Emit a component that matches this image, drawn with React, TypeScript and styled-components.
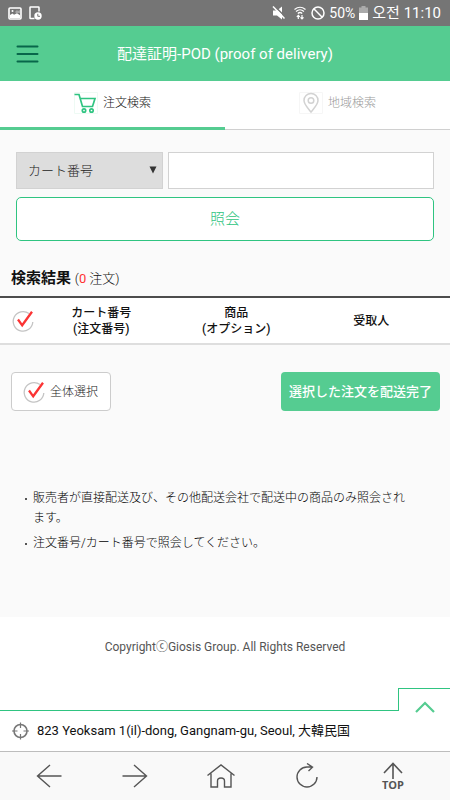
import React, { useState } from "react";
import styled, { createGlobalStyle } from "styled-components";

const green = "#55cc91";
const line = "#2fc481";
const ink = "#555";

const GlobalStyle = createGlobalStyle`
  * { box-sizing: border-box; }
  body {
    margin: 0;
    background: #fff;
    color: #222;
    font-family: Roboto, "Noto Sans CJK JP", sans-serif;
    font-size: 12px;
    line-height: 20px;
  }
  button, input, select { font: inherit; color: inherit; margin: 0; }
  button { cursor: pointer; }
`;

const Page = styled.div`
  min-height: 100vh;
  display: flex;
  flex-direction: column;
`;

const StatusBar = styled.div`
  height: 26px;
  padding: 0 9px 0 8px;
  display: flex;
  align-items: center;
  justify-content: space-between;
  background: #757575;
  color: #fff;
  font-family: Roboto, "Noto Sans CJK KR", sans-serif;
  font-size: 15px;
`;

const StatusGroup = styled.div<{ $gap: number }>`
  display: flex;
  align-items: center;
  gap: ${(p) => p.$gap}px;
  white-space: nowrap;
`;

const Percent = styled.span`
  font-size: 14px;
`;

const Header = styled.header`
  height: 55px;
  padding: 0 16px;
  display: grid;
  grid-template-columns: 24px 1fr 24px;
  align-items: center;
  background: ${green};
`;

const IconButton = styled.button`
  display: flex;
  align-items: center;
  justify-content: center;
  padding: 0;
  border: 0;
  background: none;
`;

const Title = styled.h1`
  margin: 0;
  text-align: center;
  color: #fff;
  font-size: 15px;
  font-weight: 400;
`;

const Tabs = styled.nav`
  display: grid;
  grid-template-columns: 1fr 1fr;
`;

const Tab = styled.button<{ $active: boolean }>`
  height: 49px;
  padding: 0 0 5px;
  display: flex;
  align-items: center;
  justify-content: center;
  gap: 5px;
  border: 0;
  background: #fff;
  box-shadow: inset 0 ${(p) => (p.$active ? `-3px ${green}` : "-1px #d0d0d0")};
  color: ${(p) => (p.$active ? "#111" : "#999")};
  font-weight: 300;
`;

const Main = styled.main`
  padding: 22px 0 64px;
  background: #fafafa;
`;

const Form = styled.form`
  padding: 0 16px;
  display: grid;
  grid-template-columns: 147px 1fr;
  gap: 8px 5px;
`;

const SelectBox = styled.div`
  position: relative;
`;

const Select = styled.select`
  appearance: none;
  width: 100%;
  height: 37px;
  padding: 0 24px 0 11px;
  border: 1px solid #d2d2d2;
  border-radius: 0;
  background: #ddd;
  font-size: 13px;
  font-weight: 300;
`;

const SelectArrow = styled.svg`
  position: absolute;
  right: 6px;
  top: 14px;
  pointer-events: none;
`;

const TextInput = styled.input`
  width: 100%;
  height: 37px;
  padding: 0 10px;
  border: 1px solid #d2d2d2;
  border-radius: 0;
  background: #fff;
`;

const SearchButton = styled.button`
  grid-column: 1 / -1;
  height: 44px;
  border: 1px solid ${line};
  border-radius: 5px;
  background: #fff;
  color: ${line};
  font-size: 15px;
  font-weight: 300;
`;

const ResultTitle = styled.h2`
  margin: 27px 11px 7px;
  font-size: 15px;
  font-weight: 700;
  color: #111;
`;

const ResultCount = styled.span`
  font-size: 13px;
  font-weight: 300;
`;

const Zero = styled.span`
  color: #f33;
  font-weight: 400;
`;

const ResultTable = styled.table`
  width: 100%;
  table-layout: fixed;
  border-collapse: collapse;
  background: #fff;
  border-top: 2px solid #4c4c4c;
  border-bottom: 2px solid #dedede;
`;

const HeadCell = styled.th<{ $width?: number }>`
  width: ${(p) => (p.$width ? `${p.$width}%` : "auto")};
  height: 47px;
  padding: 0;
  text-align: center;
  vertical-align: middle;
  line-height: 16px;
  font-weight: 500;
  color: #111;
`;

const TickLabel = styled.label`
  display: flex;
  align-items: center;
  justify-content: center;
  cursor: pointer;
`;

const HiddenInput = styled.input`
  appearance: none;
  width: 0;
  height: 0;
`;

const Actions = styled.div`
  padding: 27px 10px 0 11px;
  display: flex;
  justify-content: space-between;
`;

const SelectAll = styled.button`
  height: 39px;
  padding: 0 12px 0 11px;
  display: flex;
  align-items: center;
  gap: 5px;
  border: 1px solid #ccc;
  border-radius: 4px;
  background: #fff;
  font-weight: 300;
`;

const CompleteButton = styled.button`
  height: 39px;
  padding: 0 8px;
  border: 0;
  border-radius: 4px;
  background: ${green};
  color: #fff;
  font-size: 13px;
  font-weight: 500;
`;

const Notes = styled.ul`
  margin: 77px 32px 0 24px;
  padding: 0;
  display: grid;
  gap: 5px;
  list-style: none;
  font-weight: 300;
  color: #000;
`;

const Note = styled.li`
  display: grid;
  grid-template-columns: 9px minmax(0, 1fr);

  &::before {
    content: "";
    width: 2px;
    height: 2px;
    margin-top: 10px;
    margin-left: 1px;
    background: #555;
  }
`;

const NoteText = styled.span`
  padding-right: 8px;
`;

const Footer = styled.footer`
  padding: 20px 0 24px;
  text-align: center;
  color: #555;
`;

const Dock = styled.div`
  margin-top: auto;
`;

const DockTop = styled.div`
  display: flex;
`;

const DockLine = styled.div`
  flex: 1;
  border-bottom: 1px solid ${line};
`;

const DockToggle = styled(IconButton)`
  width: 52px;
  height: 23px;
  padding-top: 14px;
  border-top: 1px solid ${line};
  border-left: 1px solid ${line};
`;

const Location = styled.div`
  height: 40px;
  padding: 0 12px;
  display: flex;
  align-items: center;
  gap: 8px;
  font-size: 13px;
  color: #111;
`;

const Toolbar = styled.nav`
  height: 49px;
  padding: 0 14px 0 6px;
  display: grid;
  grid-template-columns: repeat(5, 1fr);
  border-top: 1px solid #bdbdbd;
  background: #f9f9f9;
`;

const TopButton = styled(IconButton)`
  flex-direction: column;
  color: ${ink};
  font-family: "Open Sans", sans-serif;
  font-size: 11px;
  line-height: 10px;
  font-weight: 700;
`;

const CheckIcon = () => (
  <svg width="22" height="22" viewBox="0 0 22 22" fill="none" aria-hidden="true">
    <path d="M17 3.6A9.8 9.8 0 1 0 20.8 12" stroke="#c4c4c4" strokeWidth="1.3" />
    <path d="M6 9.5l4.2 5.8L20 1.8" stroke="#fb3434" strokeWidth="2.3" />
  </svg>
);

const ToolIcon = ({ d }: { d: string }) => (
  <svg width="28" height="26" viewBox="0 0 28 26" fill="none" stroke={ink} strokeWidth="1.4" aria-hidden="true">
    <path d={d} />
  </svg>
);

export default function App() {
  const [tab, setTab] = useState(0);
  return (
    <Page>
      <GlobalStyle />
      <StatusBar>
        <StatusGroup $gap={7}>
          <svg width="14" height="13" viewBox="0 0 14 13" aria-hidden="true">
            <rect x="1" y="1" width="12" height="11" rx="1" fill="none" stroke="#fff" strokeWidth="1.6" />
            <path d="M2 8l2.5-1.5L6 7.8l3-1.6 3 2V11H2z" fill="#fff" />
            <circle cx="4.5" cy="4" r="1" fill="#fff" />
            <path d="M7 5l2-2 1 1 2-1v3H8z" fill="#fff" opacity=".35" />
          </svg>
          <svg width="13" height="14" viewBox="0 0 13 14" fill="none" aria-hidden="true">
            <path d="M5.5 12.5H1.6Q1 12.5 1 11.9V1.5Q1 1 1.6 1H9.4Q10 1 10 1.5V5.5" stroke="#fff" strokeWidth="1.5" />
            <circle cx="9" cy="10" r="3.7" fill="#fff" />
            <path d="M8.8 7.8V10.3H11" stroke="#757575" />
          </svg>
        </StatusGroup>
        <StatusGroup $gap={4}>
          <svg width="18" height="14" viewBox="0 0 18 14" aria-hidden="true">
            <path d="M2 4.5H6L11 .5V13.500L6 9.500H2z" fill="#fff" />
            <path d="M2.500 -1L15.500 12" stroke="#757575" strokeWidth="1.500" />
            <path d="M2 .5L13.500 12.500" stroke="#fff" strokeWidth="1.500" />
          </svg>
          <svg width="14" height="14" viewBox="6 0 14 14" fill="none" stroke="#fff" strokeWidth="1.2" aria-hidden="true">
            <path d="M7.5 3.5Q13 -1 18.5 3.5M9 5.5Q13 2 17 5.5M10.8 7.5Q13 5.5 15.2 7.5" />
            <path d="M11.3 13V9.5M9.8 10.8l1.5-1.5 1.5 1.5M15 9V12.5M13.5 11.3l1.5 1.5 1.5-1.5" />
          </svg>
          <svg width="14" height="14" viewBox="0 0 14 14" fill="none" stroke="#fff" strokeWidth="1.5" aria-hidden="true">
            <circle cx="7" cy="7" r="6" />
            <path d="M2.8 2.8l8.4 8.4" />
          </svg>
          <Percent>50%</Percent>
          <svg width="9" height="14" viewBox="0 0 9 14" aria-hidden="true">
            <path d="M2.5 0h4v1.5H9V7H0V1.5H2.5z" fill="#aaa" />
            <path d="M0 7h9v7H0z" fill="#fff" />
          </svg>
          <span>오전 11:10</span>
        </StatusGroup>
      </StatusBar>

      <Header>
        <IconButton type="button" aria-label="メニュー">
          <svg width="24" height="20" viewBox="0 0 24 20" stroke="#08664a" strokeWidth="2" strokeLinecap="round" aria-hidden="true">
            <path d="M1.5 2.5H21.5M1.5 10H21.5M1.5 17.5H21.5" />
          </svg>
        </IconButton>
        <Title>配達証明-POD (proof of delivery)</Title>
      </Header>

      <Tabs>
        <Tab type="button" $active={tab === 0} onClick={() => setTab(0)}>
          <svg width="24" height="22" viewBox="0 0 24 22" fill="none" stroke={line} strokeWidth="1.7" aria-hidden="true">
            <path d="M.5 .5H23.5V21.5H.5z" stroke="#eefaf4" strokeWidth="1" />
            <path d="M.5 2.5H5L8.5 14.5H18.5L21 6.5H6.3" />
            <circle cx="10" cy="18.5" r="1.7" />
            <circle cx="17.5" cy="18.5" r="1.7" />
          </svg>
          注文検索
        </Tab>
        <Tab type="button" $active={tab === 1} onClick={() => setTab(1)}>
          <svg width="24" height="22" viewBox="0 0 24 22" fill="none" stroke="#d2d2d2" strokeWidth="1.5" aria-hidden="true">
            <path d="M.5 .5H23.5V21.5H.5z" stroke="#f6f6f6" strokeWidth="1" />
            <path d="M12 20C9 16 5 12.5 5 8.5A7 7 0 0 1 19 8.5C19 12.5 15 16 12 20z" />
            <circle cx="12" cy="8.5" r="2.8" />
          </svg>
          地域検索
        </Tab>
      </Tabs>

      <Main>
        <Form onSubmit={(e) => e.preventDefault()}>
          <SelectBox>
            <Select aria-label="検索条件">
              <option>カート番号</option>
            </Select>
            <SelectArrow width="8" height="8" viewBox="0 0 8 8" aria-hidden="true">
              <path d="M.5 .5h7L4 7.5z" fill="#333" />
            </SelectArrow>
          </SelectBox>
          <TextInput type="text" aria-label="カート番号" />
          <SearchButton type="submit">照会</SearchButton>
        </Form>

        <ResultTitle>
          検索結果 <ResultCount>(<Zero>0</Zero> 注文)</ResultCount>
        </ResultTitle>
        <ResultTable>
          <thead>
            <tr>
              <HeadCell $width={10}>
                <TickLabel>
                  <HiddenInput type="checkbox" aria-label="選択" />
                  <CheckIcon />
                </TickLabel>
              </HeadCell>
              <HeadCell $width={25}>カート番号<br />(注文番号)</HeadCell>
              <HeadCell $width={35}>商品<br />(オプション)</HeadCell>
              <HeadCell $width={25}>受取人</HeadCell>
              <HeadCell $width={5} aria-hidden="true" />
            </tr>
          </thead>
        </ResultTable>

        <Actions>
          <SelectAll type="button">
            <CheckIcon />
            全体選択
          </SelectAll>
          <CompleteButton type="button">選択した注文を配送完了</CompleteButton>
        </Actions>

        <Notes>
          <Note>
            <NoteText>販売者が直接配送及び、その他配送会社で配送中の商品のみ照会されます。</NoteText>
          </Note>
          <Note>
            <NoteText>注文番号/カート番号で照会してください。</NoteText>
          </Note>
        </Notes>
      </Main>

      <Footer>CopyrightⓒGiosis Group. All Rights Reserved</Footer>

      <Dock>
        <DockTop>
          <DockLine />
          <DockToggle type="button" aria-label="開く">
            <svg width="20" height="12" viewBox="0 0 20 12" fill="none" stroke={green} strokeWidth="2.2" aria-hidden="true">
              <path d="M1 11L10 2L19 11" />
            </svg>
          </DockToggle>
        </DockTop>
        <Location>
          <svg width="17" height="18" viewBox="0 0 17 18" fill="none" stroke="#777" aria-hidden="true">
            <circle cx="8.5" cy="9" r="6.5" strokeWidth="1.6" />
            <path d="M8.5 .5V6M8.5 12V17.5M0 9H5.5M11.5 9H17" strokeWidth="1.2" />
          </svg>
          823 Yeoksam 1(il)-dong, Gangnam-gu, Seoul, 大韓民国
        </Location>
        <Toolbar>
          <IconButton type="button" aria-label="戻る">
            <ToolIcon d="M26.5 13H2.5M15 2L2.5 13L15 24" />
          </IconButton>
          <IconButton type="button" aria-label="進む">
            <ToolIcon d="M1.5 13H25.5M13 2L25.5 13L13 24" />
          </IconButton>
          <IconButton type="button" aria-label="ホーム">
            <ToolIcon d="M.5 12.5L14 2L27.5 12.5M4 10.5V24H10.500V18Q10.500 15 14 15Q17.500 15 17.500 18V24H24V10.500" />
          </IconButton>
          <IconButton type="button" aria-label="更新">
            <ToolIcon d="M24 14A10 10 0 1 1 14 4H19.500M14 .5L19.500 4.200L15.500 8" />
          </IconButton>
          <TopButton type="button">
            <svg width="20" height="18" viewBox="0 0 20 18" fill="none" stroke={ink} strokeWidth="1.6" aria-hidden="true">
              <path d="M10 17V1.500M1 11L10 1.500L19 11" />
            </svg>
            TOP
          </TopButton>
        </Toolbar>
      </Dock>
    </Page>
  );
}
